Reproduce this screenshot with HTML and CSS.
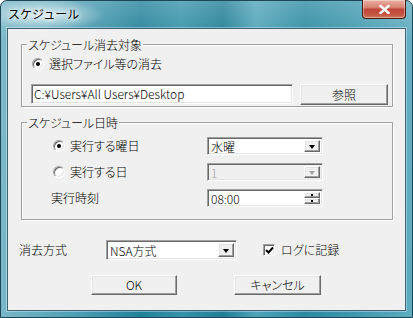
FILE: index.html
```html
<!DOCTYPE html>
<html lang="ja">
<head>
<meta charset="utf-8">
<title>スケジュール</title>
<link rel="stylesheet" href="styles.css">
</head>
<body>
<div class="window">
  <div class="titlebar">
    <span class="title">スケジュール</span>
    <div class="close">
      <svg width="11" height="9" viewBox="0 0 11 9"><path d="M1.5 1 L9.5 8 M9.5 1 L1.5 8" stroke="#fff" stroke-width="2.4" stroke-linecap="square"/></svg>
    </div>
  </div>
  <div class="client">
    <div class="group g1">
      <div class="gtitle">スケジュール消去対象</div>
      <div class="row radio-row">
        <span class="radio checked"></span><span class="lbl">選択ファイル等の消去</span>
      </div>
      <div class="row path-row">
        <div class="edit sunken path">C:¥Users¥All Users¥Desktop</div>
        <div class="btn raised browse">参照</div>
      </div>
    </div>

    <div class="group g2">
      <div class="gtitle">スケジュール日時</div>
      <div class="row sched-row first">
        <div class="col1"><span class="radio checked"></span><span class="lbl">実行する曜日</span></div>
        <div class="combo sunken"><span class="val">水曜</span><span class="drop raised"><i class="tri"></i></span></div>
      </div>
      <div class="row sched-row">
        <div class="col1"><span class="radio"></span><span class="lbl">実行する日</span></div>
        <div class="combo sunken disabled"><span class="val">1</span><span class="drop raised"><i class="tri"></i></span></div>
      </div>
      <div class="row sched-row">
        <div class="col1 time-lbl"><span class="lbl">実行時刻</span></div>
        <div class="combo sunken"><span class="val">08:00</span><span class="spin"><span class="half raised"><i class="dot"></i></span><span class="half raised"><i class="dot"></i></span></span></div>
      </div>
    </div>

    <div class="row method-row">
      <span class="method-lbl">消去方式</span>
      <div class="combo sunken method"><span class="val">NSA方式</span><span class="drop raised"><i class="tri"></i></span></div>
      <span class="check sunken">
        <svg width="9" height="9" viewBox="0 0 9 9"><path d="M1 4 L3.5 6.5 L8 1.5" fill="none" stroke="#000" stroke-width="2"/></svg>
      </span>
      <span class="lbl">ログに記録</span>
    </div>

    <div class="row buttons">
      <div class="btn raised ok">OK</div>
      <div class="btn raised cancel">キャンセル</div>
    </div>
  </div>
</div>
</body>
</html>
```

FILE: styles.css
```css
* { box-sizing: border-box; }
html, body { margin: 0; padding: 0; background: #fff; }
body {
  font-family: "Noto Sans CJK JP", sans-serif;
  font-size: 12px;
  color: #000;
}
.window {
  width: 413px;
  height: 318px;
  border: 1px solid #1f4656;
  border-radius: 7px 7px 0 0;
  background:
    linear-gradient(rgba(255,255,255,0.22), rgba(255,255,255,0.04) 40px, rgba(0,0,0,0) 100%),
    linear-gradient(90deg, #78b7c7 0%, #4f9fb4 18%, #22819a 34%, #3592a8 44%, #1f7d95 54%, #4fa3b8 62%, #2b8aa1 74%, #3f98ae 86%, #5eabbf 100%);
  padding: 0 6px 6px 6px;
  display: flex;
  flex-direction: column;
}
.titlebar {
  height: 27px;
  display: flex;
  align-items: flex-start;
  background: radial-gradient(ellipse 60px 16px at 44px 14px, rgba(255,255,255,0.75), rgba(255,255,255,0) 100%);
  margin: 0 -6px;
  padding: 0 6px;
}
.title {
  font-size: 12px;
  line-height: 16px;
  margin-top: 5px;
  margin-left: 1px;
  text-shadow: 0 0 4px #fff, 0 0 6px #fff;
}
.close {
  margin-left: auto;
  margin-top: -1px;
  width: 44px;
  height: 19px;
  border: 1px solid #4a1a14;
  border-top: none;
  border-radius: 0 0 4px 4px;
  background: linear-gradient(#eab0a3 0%, #d98676 40%, #c0483a 52%, #c55443 80%, #d37a5e 100%);
  box-shadow: inset 0 0 0 1px rgba(255,255,255,0.35);
  display: flex;
  align-items: center;
  justify-content: center;
}
.client {
  flex: 1;
  background: #f0f0f0;
  border: 1px solid #3d6473;
  box-shadow: 0 0 0 1px rgba(255,255,255,0.35);
  display: flex;
  flex-direction: column;
  font-feature-settings: "palt";
  font-weight: 300;
}
.row { display: flex; align-items: center; }
.lbl { line-height: 14px; white-space: nowrap; }

.group {
  margin-left: 13px;
  width: 372px;
  border: 1px solid #a0a0a0;
  box-shadow: 1px 1px 0 #fff, inset 1px 1px 0 #fff;
  display: flex;
  flex-direction: column;
}
.g1 { margin-top: 15px; padding-bottom: 1px; }
.g2 { margin-top: 15px; padding-bottom: 12px; }
.gtitle {
  align-self: flex-start;
  margin-top: -7px;
  margin-left: 5px;
  padding: 0 1px;
  line-height: 14px;
  background: #f0f0f0;
}

.radio {
  width: 12px;
  height: 12px;
  border-radius: 50%;
  border: 1px solid;
  border-color: #a0a0a0 #fff #fff #a0a0a0;
  background: #fff;
  box-shadow: inset 1px 1px 0 #696969, inset -1px -1px 0 #e3e3e3;
  display: inline-flex;
  align-items: center;
  justify-content: center;
  flex: none;
}
.radio.checked::after {
  content: "";
  width: 4px;
  height: 4px;
  border-radius: 50%;
  background: #000;
}
.radio-row { margin-top: 5px; padding-left: 10px; height: 14px; }
.radio-row .lbl { margin-left: 5px; }

.sunken {
  border: 1px solid;
  border-color: #a0a0a0 #fff #fff #a0a0a0;
  box-shadow: inset 1px 1px 0 #696969, inset -1px -1px 0 #e3e3e3;
  background: #fff;
}
.raised {
  border: 1px solid;
  border-color: #fff #696969 #696969 #fff;
  box-shadow: inset -1px -1px 0 #a0a0a0, inset 1px 1px 0 #e3e3e3;
  background: #f0f0f0;
}
.path-row { margin-top: 13px; padding-left: 9px; align-items: flex-start; }
.edit {
  height: 20px;
  line-height: 17px;
  padding-left: 2px;
  white-space: nowrap;
}
.path { width: 262px; }
.btn {
  display: flex;
  align-items: center;
  justify-content: center;
  line-height: 14px;
}
.browse { margin-left: 7px; width: 88px; height: 21px; }

.sched-row { margin-top: 8px; padding-left: 31px; height: 18px; }
.sched-row.first { margin-top: 7px; }
.col1 { width: 154px; display: flex; align-items: center; }
.col1 .lbl { margin-left: 5px; }
.col1.time-lbl .lbl { margin-left: -2px; }

.combo {
  width: 116px;
  height: 18px;
  display: flex;
  padding: 2px;
}
.combo .val { flex: 1; line-height: 14px; padding-left: 1px; white-space: nowrap; }
.combo.disabled { background: #f0f0f0; }
.combo.disabled .val { color: #a0a0a0; }
.drop {
  width: 16px;
  display: flex;
  align-items: center;
  justify-content: center;
}
.tri {
  width: 0; height: 0;
  border-left: 3.5px solid transparent;
  border-right: 3.5px solid transparent;
  border-top: 4px solid #000;
  margin-top: 1px;
}
.disabled .tri { border-top-color: #a0a0a0; }
.spin { width: 16px; display: flex; flex-direction: column; }
.spin .half { flex: 1; display: flex; align-items: center; justify-content: center; }
.dot { width: 2px; height: 2px; background: #000; }

.method-row { margin-top: 20px; padding-left: 11px; height: 20px; }
.method-lbl { width: 87px; line-height: 14px; }
.combo.method { width: 131px; height: 20px; }
.combo.method .val { line-height: 15px; }
.check {
  margin-left: 26px;
  width: 12px;
  height: 12px;
  display: inline-flex;
  align-items: center;
  justify-content: center;
  flex: none;
}
.method-row .lbl { margin-left: 6px; }

.buttons { margin-top: 15px; padding-left: 83px; }
.ok { width: 86px; height: 20px; }
.cancel { width: 87px; height: 20px; margin-left: 57px; }
```
